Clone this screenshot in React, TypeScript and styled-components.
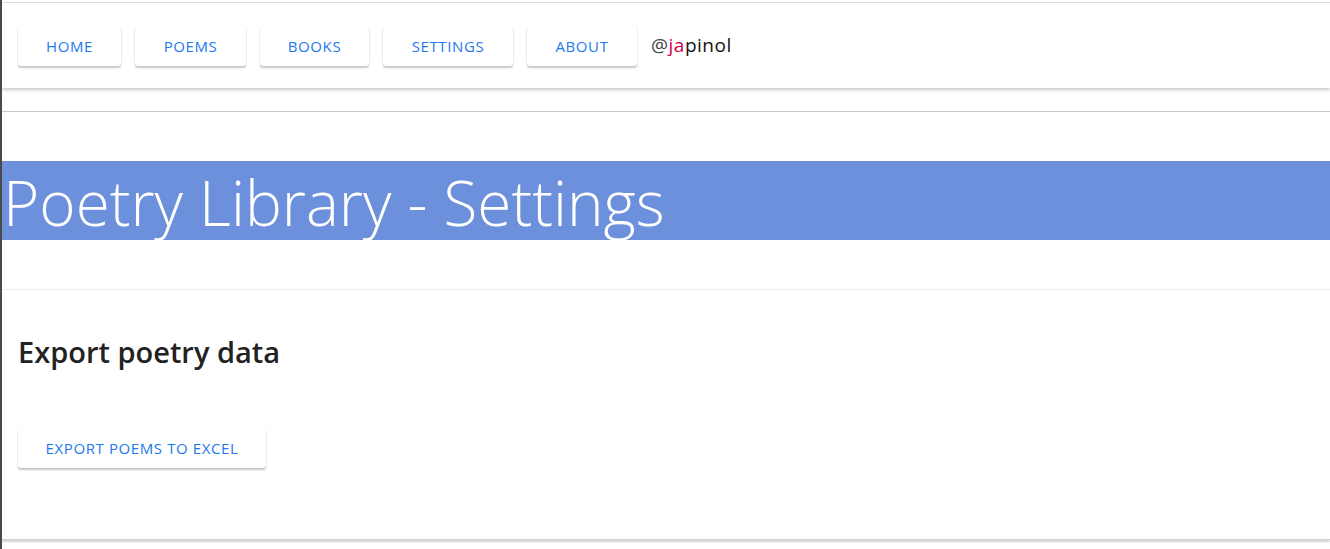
import React from 'react'
import styled, { createGlobalStyle } from 'styled-components'

const GlobalStyle = createGlobalStyle`
  html, body {
    margin: 0;
    padding: 0;
    background: #ffffff;
  }
  body {
    font-family: "Open Sans", "Noto Sans", sans-serif;
    color: #222;
  }
`

const Frame = styled.div`
  min-height: 549px;
  box-sizing: border-box;
  border-left: 2px solid #4a4a4a;
  padding-top: 2px;
  overflow: hidden;
`

const NavBar = styled.nav`
  height: 86px;
  box-sizing: border-box;
  border-top: 1px solid #dcdcdc;
  display: flex;
  align-items: center;
  gap: 14px;
  padding-left: 16px;
  box-shadow: 0 2px 3px rgba(0, 0, 0, 0.22);
`

const Button = styled.button<{ $width: number }>`
  width: ${({ $width }) => $width}px;
  height: 40px;
  border: none;
  border-radius: 3px;
  background: #fff;
  box-shadow: 0 2px 2px rgba(0, 0, 0, 0.22), 0 0 1px rgba(0, 0, 0, 0.12);
  color: #1e78f0;
  font-family: "Open Sans", "Noto Sans", sans-serif;
  font-size: 15px;
  font-weight: 500;
  letter-spacing: 0.6px;
  text-transform: uppercase;
  padding: 0;
  cursor: pointer;
`

const Handle = styled.span`
  font-size: 19px;
  letter-spacing: 0.5px;
  color: #111;
  margin-top: -2px;
  span.at {
    color: #444;
  }
  span.ja {
    color: #d6004f;
  }
`

const Rule = styled.hr<{ $top: number; $color: string }>`
  margin: ${({ $top }) => $top}px 0 0;
  border: none;
  border-top: 1px solid ${({ $color }) => $color};
  height: 0;
`

const Banner = styled.h1`
  margin: 49px 0 0;
  height: 79px;
  background: #6d90dc;
  color: #fff;
  font-family: "Open Sans", sans-serif;
  font-weight: 300;
  font-size: 62px;
  line-height: 83px;
  padding-left: 1px;
  white-space: nowrap;
`

const Section = styled.section`
  padding: 0 16px;
  height: 250px;
  box-sizing: border-box;
  box-shadow: 0 2px 2px rgba(0, 0, 0, 0.18);
  border-bottom: 1px solid #d0d0d0;
`

const SectionTitle = styled.h2`
  margin: 0;
  padding-top: 42px;
  font-family: "Open Sans", sans-serif;
  font-weight: 600;
  font-size: 29px;
  line-height: 40px;
  color: #222;
`

const Actions = styled.div`
  margin-top: 56px;
`

export default function App() {
  const links = [
    { label: 'Home', width: 103 },
    { label: 'Poems', width: 111 },
    { label: 'Books', width: 109 },
    { label: 'Settings', width: 130 },
    { label: 'About', width: 110 },
  ]

  return (
    <>
      <GlobalStyle />
      <Frame>
        <NavBar>
          {links.map((link) => (
            <Button key={link.label} $width={link.width}>
              {link.label}
            </Button>
          ))}
          <Handle>
            <span className="at">@</span>
            <span className="ja">ja</span>pinol
          </Handle>
        </NavBar>
        <Rule $top={23} $color="#c8c8c8" />
        <Banner>Poetry Library - Settings</Banner>
        <Rule $top={49} $color="#ececec" />
        <Section>
          <SectionTitle>Export poetry data</SectionTitle>
          <Actions>
            <Button $width={248}>Export poems to Excel</Button>
          </Actions>
        </Section>
      </Frame>
    </>
  )
}
